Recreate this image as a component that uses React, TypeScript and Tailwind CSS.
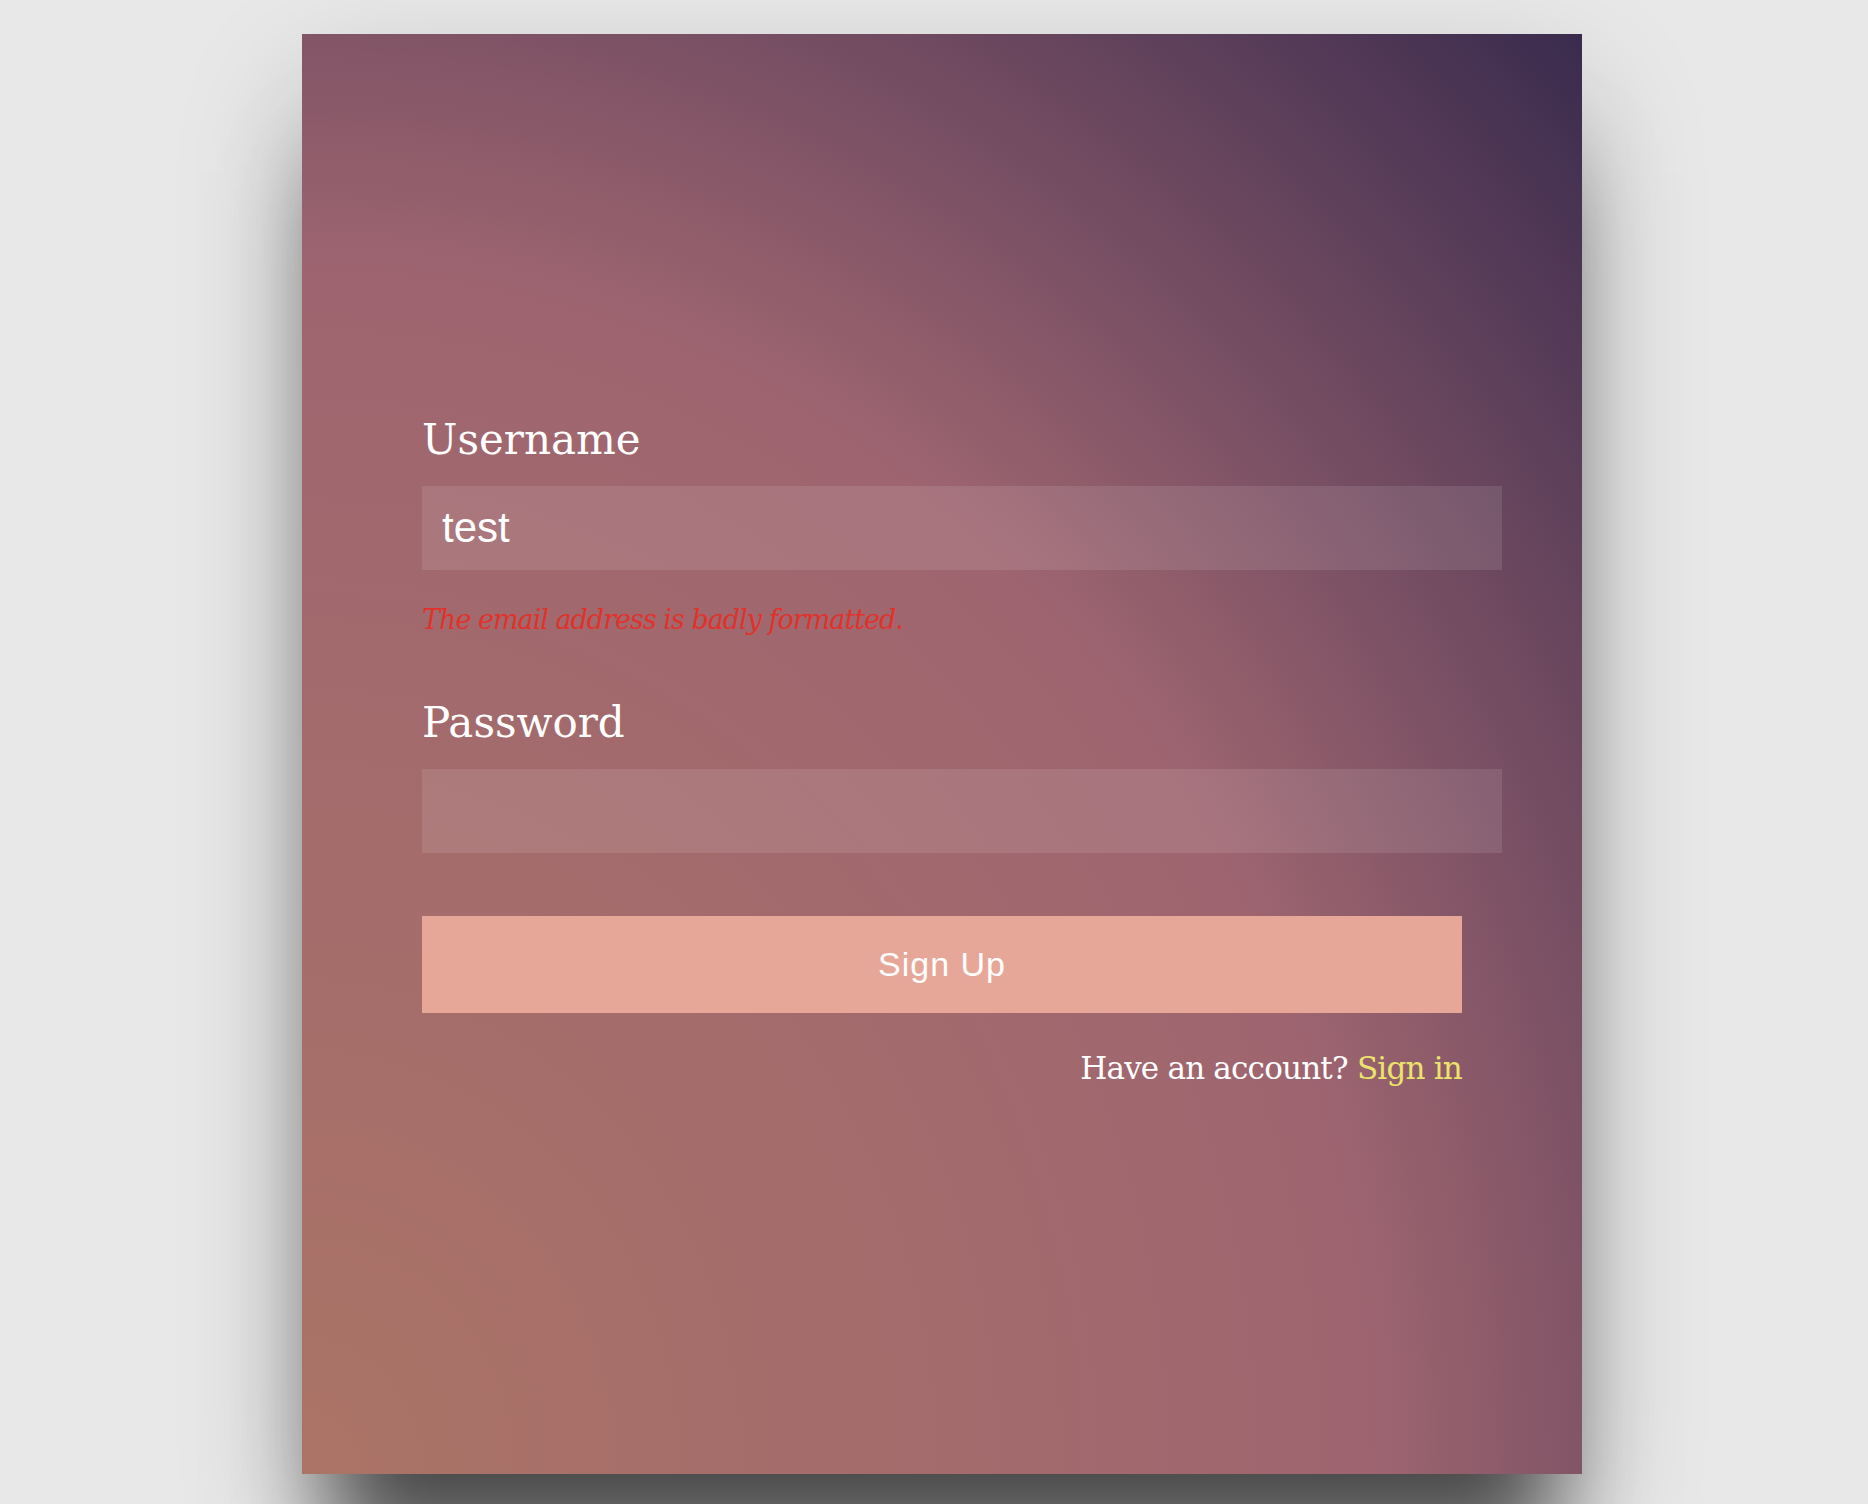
import { useState } from 'react'

const serif = "font-['DejaVu_Serif',serif]"
const sans = "font-['Liberation_Sans',Arial,sans-serif]"

export default function App() {
  const [username, setUsername] = useState('test')
  const [password, setPassword] = useState('')

  return (
    <div className="flex min-h-screen justify-center overflow-hidden bg-[#e8e8e8] pl-4 pt-[34px]">
      <div
        className={`h-[1440px] w-[1280px] shrink-0 bg-[radial-gradient(ellipse_at_bottom_left,#ab7466_0%,#9e6570_59%,#3a2b4e_100%)] px-[120px] pt-[382px] shadow-[0_110px_90px_-30px_rgba(0,0,0,0.62),0_50px_120px_rgba(0,0,0,0.2)] ${serif}`}
      >
        <form onSubmit={(e) => e.preventDefault()}>
          <label htmlFor="username" className="block text-[42px] leading-[48px] text-white">
            Username
          </label>
          <input
            id="username"
            value={username}
            onChange={(e) => setUsername(e.target.value)}
            className={`mt-[22px] block h-[84px] w-[1080px] bg-white/10 px-5 text-[42px] text-white outline-none ${sans}`}
          />
          <p className="mt-[34px] text-[27px] italic leading-[32px] tracking-[-1px] text-[#e0322b]">
            The email address is badly formatted.
          </p>

          <label htmlFor="password" className="mt-[63px] block text-[42px] leading-[48px] text-white">
            Password
          </label>
          <input
            id="password"
            type="password"
            value={password}
            onChange={(e) => setPassword(e.target.value)}
            className={`mt-[22px] block h-[84px] w-[1080px] bg-white/10 px-5 text-[42px] text-white outline-none ${sans}`}
          />

          <button
            type="submit"
            className={`mt-[63px] block h-[97px] w-full bg-[#e6a798] text-[34px] tracking-[1px] text-white ${sans}`}
          >
            Sign Up
          </button>

          <p className="mt-[35px] text-right text-[31px] leading-[40px] tracking-[-0.8px] text-white">
            Have an account? <a href="#" className="text-[#ebe36b]">Sign in</a>
          </p>
        </form>
      </div>
    </div>
  )
}
